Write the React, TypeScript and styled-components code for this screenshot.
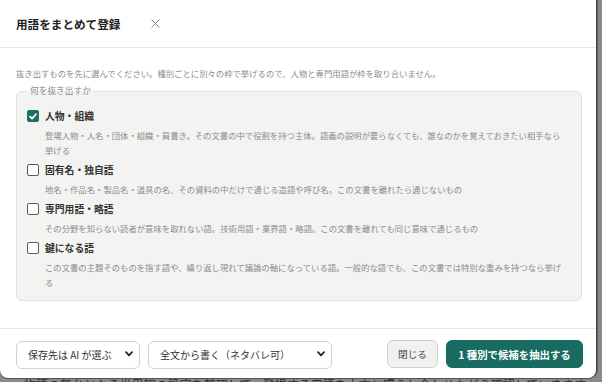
import React from "react";
import styled, { createGlobalStyle } from "styled-components";

const Global = createGlobalStyle`
  html, body { margin: 0; padding: 0; }
  body {
    background: #7d7d7d;
    font-family: "Noto Sans CJK JP", "Noto Sans", sans-serif;
    overflow: hidden;
  }
`;

const Page = styled.div`
  width: 602px;
  height: 382px;
  overflow: hidden;
  background: #8a8a8a;
`;

const Dialog = styled.div`
  width: 596px;
  height: 378px;
  box-sizing: border-box;
  background: #fff;
  border-radius: 0 0 8px 8px;
  box-shadow: 1px 0 0 #4a4a4a, 2px 0 0 #5a5a5a, 0 1px 0 #555;
  display: flex;
  flex-direction: column;
`;

const BackdropText = styled.p`
  margin: 1px 0 0 24px;
  font-size: 12px;
  line-height: 12px;
  color: #2c2c2c;
  white-space: nowrap;
`;

const Header = styled.div`
  height: 48px;
  box-sizing: border-box;
  border-bottom: 1px solid #e8e8e6;
  padding: 0 16px;
  display: flex;
  align-items: center;
  gap: 30px;
`;

const Title = styled.h2`
  margin: 0;
  font-size: 11.6px;
  font-weight: 700;
  color: #222;
  line-height: 16px;
`;

const CloseBtn = styled.button`
  border: none;
  background: none;
  padding: 0;
  width: 10px;
  height: 10px;
  display: flex;
  align-items: center;
  justify-content: center;
  cursor: pointer;
`;

const Body = styled.div`
  flex: 1;
  padding: 19px 14px 0 16px;
`;

const Lead = styled.p`
  margin: 0;
  font-size: 8.35px;
  line-height: 12px;
  color: #8c8c8c;
  white-space: nowrap;
`;

const Group = styled.fieldset`
  margin: 6px 0 0 0;
  padding: 0 10px 10px 10px;
  border: 1px solid #e0e0de;
  border-radius: 6px;
  background: #f3f3f2;
  min-width: 0;
`;

const Legend = styled.legend`
  padding: 0 3px;
  font-size: 8.7px;
  line-height: 12px;
  color: #8c8c8c;
`;

const Options = styled.div`
  display: flex;
  flex-direction: column;
  gap: 3px;
  padding-top: 10px;
`;

const Option = styled.div``;

const OptionLabel = styled.label`
  display: flex;
  align-items: center;
  gap: 6px;
  height: 18px;
  font-size: 9.8px;
  font-weight: 700;
  color: #333;
`;

const Box = styled.span<{ $checked?: boolean }>`
  width: 12px;
  height: 12px;
  box-sizing: border-box;
  border-radius: 2px;
  border: 1px solid ${(p) => (p.$checked ? "#1d6f65" : "#5a5a5a")};
  background: ${(p) => (p.$checked ? "#1d6f65" : "#fff")};
  display: flex;
  align-items: center;
  justify-content: center;
  flex: none;
`;

const Desc = styled.p`
  margin: 3px 0 0 18px;
  max-width: 520px;
  font-size: 8.35px;
  line-height: 15px;
  color: #8c8c8c;
`;

const Footer = styled.div`
  border-top: 1px solid #e8e8e6;
  padding: 11px 13px 10px 16px;
  display: flex;
  align-items: center;
  gap: 8px;
`;

const SelectWrap = styled.div<{ $w: number }>`
  position: relative;
  width: ${(p) => p.$w}px;
  height: 28px;
`;

const Select = styled.select`
  appearance: none;
  -webkit-appearance: none;
  width: 100%;
  height: 100%;
  box-sizing: border-box;
  border: 1px solid #d2d2d0;
  border-radius: 6px;
  background: #fff;
  padding: 0 20px 0 11px;
  font-family: "Noto Sans CJK JP", "Noto Sans", sans-serif;
  font-size: 10px;
  color: #333;
  outline: none;
`;

const Chevron = styled.svg`
  position: absolute;
  right: 7px;
  top: 11px;
  pointer-events: none;
`;

const Spacer = styled.div`
  flex: 1;
`;

const Button = styled.button<{ $primary?: boolean }>`
  height: 28px;
  box-sizing: border-box;
  border-radius: 6px;
  border: 1px solid ${(p) => (p.$primary ? "#176b61" : "#d0d0ce")};
  background: ${(p) => (p.$primary ? "#176b61" : "#f1f1f0")};
  color: ${(p) => (p.$primary ? "#fff" : "#444")};
  font-family: "Noto Sans CJK JP", "Noto Sans", sans-serif;
  font-size: ${(p) => (p.$primary ? "10.4px" : "9.6px")};
  font-weight: ${(p) => (p.$primary ? 700 : 400)};
  padding: 0;
  white-space: nowrap;
  width: ${(p) => (p.$primary ? "137px" : "51px")};
  cursor: pointer;
`;

const options = [
  {
    label: "人物・組織",
    checked: true,
    desc: "登場人物・人名・団体・組織・肩書き。その文書の中で役割を持つ主体。語義の説明が要らなくても、誰なのかを覚えておきたい相手なら挙げる",
  },
  {
    label: "固有名・独自語",
    checked: false,
    desc: "地名・作品名・製品名・道具の名、その資料の中だけで通じる造語や呼び名。この文書を離れたら通じないもの",
  },
  {
    label: "専門用語・略語",
    checked: false,
    desc: "その分野を知らない読者が意味を取れない語。技術用語・業界語・略語。この文書を離れても同じ意味で通じるもの",
  },
  {
    label: "鍵になる語",
    checked: false,
    desc: "この文書の主題そのものを指す語や、繰り返し現れて議論の軸になっている語。一般的な語でも、この文書では特別な重みを持つなら挙げる",
  },
];

const ChevronIcon = () => (
  <Chevron width="8" height="6" viewBox="0 0 8 6">
    <path d="M1 1.2 L4 4.3 L7 1.2" fill="none" stroke="#222" strokeWidth="1.8" strokeLinecap="round" strokeLinejoin="round" />
  </Chevron>
);

export default function App() {
  return (
    <Page>
      <Global />
      <Dialog>
        <Header>
          <Title>用語をまとめて登録</Title>
          <CloseBtn aria-label="閉じる">
            <svg width="9" height="9" viewBox="0 0 9 9">
              <path d="M0.5 0.5 L8.5 8.5 M8.5 0.5 L0.5 8.5" stroke="#8a8a8a" strokeWidth="1" />
            </svg>
          </CloseBtn>
        </Header>
        <Body>
          <Lead>抜き出すものを先に選んでください。種別ごとに別々の枠で挙げるので、人物と専門用語が枠を取り合いません。</Lead>
          <Group>
            <Legend>何を抜き出すか</Legend>
            <Options>
              {options.map((o) => (
                <Option key={o.label}>
                  <OptionLabel>
                    <Box $checked={o.checked}>
                      {o.checked && (
                        <svg width="8" height="7" viewBox="0 0 8 7">
                          <path d="M1 3.6 L3 5.6 L7 1.2" fill="none" stroke="#fff" strokeWidth="1.7" strokeLinecap="round" strokeLinejoin="round" />
                        </svg>
                      )}
                    </Box>
                    {o.label}
                  </OptionLabel>
                  <Desc>{o.desc}</Desc>
                </Option>
              ))}
            </Options>
          </Group>
        </Body>
        <Footer>
          <SelectWrap $w={124}>
            <Select defaultValue="ai">
              <option value="ai">保存先は AI が選ぶ</option>
            </Select>
            <ChevronIcon />
          </SelectWrap>
          <SelectWrap $w={184}>
            <Select defaultValue="full">
              <option value="full">全文から書く（ネタバレ可）</option>
            </Select>
            <ChevronIcon />
          </SelectWrap>
          <Spacer />
          <Button>閉じる</Button>
          <Button $primary>1 種別で候補を抽出する</Button>
        </Footer>
      </Dialog>
      <BackdropText>物語の舞台となる世界観の設定を整理して、登場する用語を本文と照らし合わせながら確認していきます。</BackdropText>
    </Page>
  );
}
